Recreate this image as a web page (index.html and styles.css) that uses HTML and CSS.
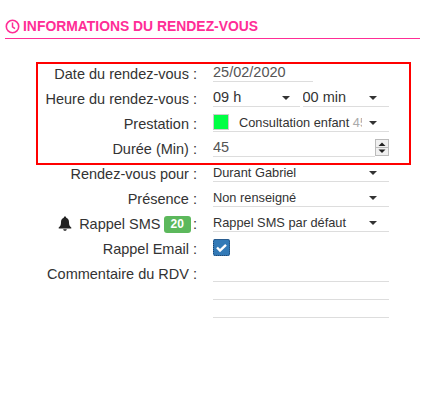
FILE: index.html
```html
<!DOCTYPE html>
<html lang="fr">
<head>
    <meta charset="UTF-8">
    <title>Informations du rendez-vous</title>
    <link rel="stylesheet" href="styles.css">
</head>
<body>
    <h2 class="title">
        <svg class="title-icon" width="15" height="15" viewBox="0 0 15 15"><circle cx="7.5" cy="7.5" r="6.2" fill="none" stroke="#ff2d96" stroke-width="1.6"/><path d="M7.5 3.6V7.8L10 9.6" fill="none" stroke="#ff2d96" stroke-width="1.5"/></svg>
        INFORMATIONS DU RENDEZ-VOUS
    </h2>

    <div class="form">
        <div class="highlight">
            <div class="row">
                <div class="label">Date du rendez-vous :</div>
                <div class="field field-date grey">25/02/2020</div>
            </div>
            <div class="row">
                <div class="label">Heure du rendez-vous :</div>
                <div class="pair">
                    <div class="field select">09 h</div>
                    <div class="field select">00 min</div>
                </div>
            </div>
            <div class="row">
                <div class="label">Prestation :</div>
                <div class="field select">
                    <span class="swatch"></span>
                    <span class="presta">Consultation enfant <span class="muted">45</span></span>
                </div>
            </div>
            <div class="row">
                <div class="label">Durée (Min) :</div>
                <div class="number-wrap">
                    <div class="field grey">45</div>
                    <svg class="spinner" width="14" height="17" viewBox="0 0 14 17"><rect x="0.5" y="0.5" width="13" height="16" fill="#f0f0f0" stroke="#bbb"/><path d="M0 8.5H14" stroke="#bbb"/><path d="M7 3.5L10.5 7H3.5Z" fill="#222"/><path d="M7 14L3.5 10.5H10.5Z" fill="#222"/></svg>
                </div>
            </div>
        </div>
        <div class="row">
            <div class="label">Rendez-vous pour :</div>
            <div class="field select small">Durant Gabriel</div>
        </div>
        <div class="row">
            <div class="label">Présence :</div>
            <div class="field select small">Non renseigné</div>
        </div>
        <div class="row">
            <div class="label">
                <svg class="bell" width="14" height="15" viewBox="0 0 14 15"><path d="M7 0.5C7.8 0.5 8.2 1 8.2 1.8C10.3 2.4 11 4.2 11 6.2C11 9 11.6 10.2 13.3 11.6V12.6H0.7V11.6C2.4 10.2 3 9 3 6.2C3 4.2 3.7 2.4 5.8 1.8C5.8 1 6.2 0.5 7 0.5Z" fill="#222"/><path d="M5.2 13.3H8.8C8.6 14.3 7.9 14.8 7 14.8C6.1 14.8 5.4 14.3 5.2 13.3Z" fill="#222"/></svg>
                Rappel SMS <span class="badge">20</span> :
            </div>
            <div class="field select small">Rappel SMS par défaut</div>
        </div>
        <div class="row">
            <div class="label">Rappel Email :</div>
            <div class="check-cell">
                <svg width="17" height="17" viewBox="0 0 17 17"><rect width="17" height="17" rx="2" fill="#337ab7"/><rect x="0.5" y="0.5" width="16" height="16" rx="2" fill="none" stroke="#1f3f66" stroke-dasharray="1 1"/><path d="M4 8.5L7 11.5L13 5.8" fill="none" stroke="#fff" stroke-width="2.4"/></svg>
            </div>
        </div>
        <div class="row row-comment">
            <div class="label">Commentaire du RDV :</div>
            <div class="comment">
                <div class="comment-line first"></div>
                <div class="comment-line"></div>
                <div class="comment-line"></div>
            </div>
        </div>
    </div>
</body>
</html>
```

FILE: styles.css
```css
body {
    margin: 0;
    font-family: "Liberation Sans", Arial, sans-serif;
    font-size: 14.5px;
    color: #333;
    background: #fff;
}
.title {
    display: flex;
    align-items: center;
    gap: 3px;
    margin: 18px 14px 0 5px;
    padding-bottom: 4px;
    height: 16px;
    border-bottom: 1px solid #ff2d96;
    font-size: 13.9px;
    line-height: 16px;
    color: #ff2d96;
}
.title-icon {
    flex: none;
}
.form {
    margin-top: 24px;
}
.highlight {
    position: relative;
}
.highlight::after {
    content: "";
    position: absolute;
    left: 36px;
    top: -1px;
    width: 371px;
    height: 99px;
    border: 2px solid #f00;
}
.row {
    display: flex;
    height: 25px;
}
.row-comment {
    height: auto;
}
.label {
    width: 197px;
    margin-right: 16px;
    flex: none;
    text-align: right;
    line-height: 23px;
    white-space: nowrap;
}
.field {
    position: relative;
    display: flex;
    align-items: center;
    box-sizing: border-box;
    width: 176px;
    height: 19px;
    border-bottom: 1px solid #ddd;
    white-space: nowrap;
    overflow: hidden;
}
.field-date {
    width: 100px;
}
.grey {
    color: #555;
}
.number-wrap {
    display: flex;
    width: 176px;
}
.number-wrap .field {
    width: 162px;
}
.spinner {
    margin-top: 1px;
}
.pair {
    display: flex;
    gap: 3px;
    width: 176px;
}
.pair .field {
    flex: 1;
    width: auto;
}
.select::after {
    content: "";
    position: absolute;
    right: 12px;
    top: 8px;
    border-left: 4px solid transparent;
    border-right: 4px solid transparent;
    border-top: 4px solid #333;
}
.pair .select:first-child::after {
    right: 10px;
}
.small {
    font-size: 12.8px;
}
.swatch {
    width: 16px;
    height: 16px;
    margin-right: 10px;
    flex: none;
    background: #0f4;
    border: 1px solid #ccc;
    box-sizing: border-box;
}
.presta {
    display: block;
    width: 123px;
    font-size: 12.8px;
    overflow: hidden;
}
.muted {
    color: #aaa;
}
.bell {
    margin-right: 3px;
    vertical-align: -2px;
}
.badge {
    display: inline-block;
    margin: 0 -2px 0 -1px;
    padding: 0 7px;
    font-size: 12px;
    font-weight: bold;
    line-height: 17px;
    color: #fff;
    background: #5cb85c;
    border-radius: 3px;
    vertical-align: 1px;
}
.check-cell {
    padding-top: 1px;
    height: 17px;
}
.comment {
    width: 176px;
}
.comment-line {
    height: 18px;
    border-bottom: 1px solid #ddd;
    box-sizing: border-box;
}
.comment-line.first {
    height: 19px;
}
```
